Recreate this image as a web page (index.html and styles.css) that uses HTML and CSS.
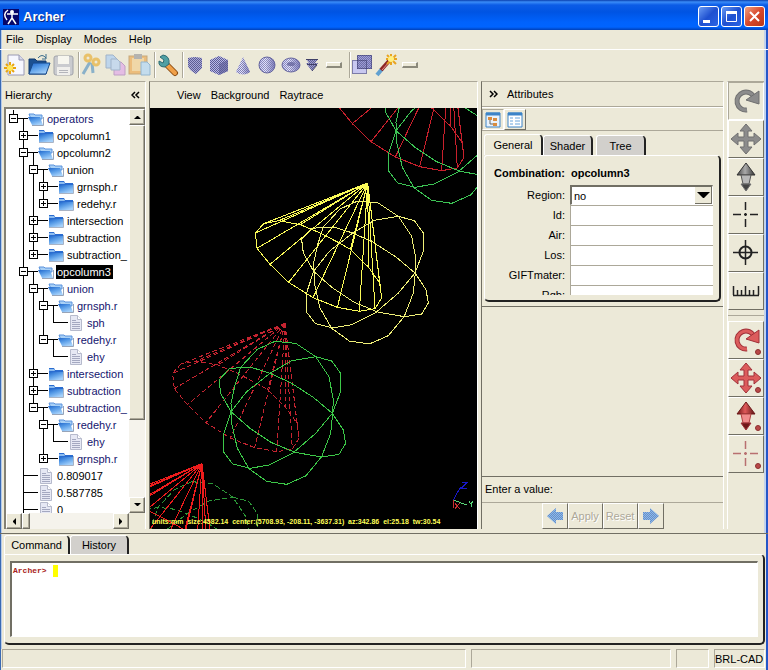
FILE: index.html
```html
<!DOCTYPE html>
<html lang="en">
<head>
    <meta charset="UTF-8">
    <meta name="viewport" content="width=device-width, initial-scale=1.0">
    <title>Archer</title>
    <link rel="stylesheet" href="styles.css">
</head>
<body>
    <!-- shared gradients and tree icons -->
    <svg class="defs" width="0" height="0" aria-hidden="true">
        <defs>
            <pattern id="dither" width="2" height="2" patternUnits="userSpaceOnUse">
                <rect width="1" height="1" fill="#5c5c94"/><rect x="1" y="1" width="1" height="1" fill="#5c5c94"/>
            </pattern>
            <linearGradient id="sheet" x1="0" y1="0" x2="0.600" y2="1">
                <stop offset="0" stop-color="#1f66cc"/><stop offset=".5" stop-color="#5a9ee8"/><stop offset="1" stop-color="#a4d0fa"/>
            </linearGradient>
            <linearGradient id="lav" x1="0" y1="0" x2="1" y2="0">
                <stop offset="0" stop-color="#c8c8f4"/><stop offset=".4" stop-color="#e4e4ff"/><stop offset="1" stop-color="#8080c0"/>
            </linearGradient>
            <linearGradient id="steel" x1="0" y1="0" x2="1" y2="0">
                <stop offset="0" stop-color="#444"/><stop offset=".45" stop-color="#aaa"/><stop offset="1" stop-color="#333"/>
            </linearGradient>
            <linearGradient id="crimson" x1="0" y1="0" x2="1" y2="0">
                <stop offset="0" stop-color="#6a1414"/><stop offset=".45" stop-color="#e05a5a"/><stop offset="1" stop-color="#5a1010"/>
            </linearGradient>
            <symbol id="folder" viewBox="0 0 16 14">
                <path d="M1 1h5l1 2h8v10H1z" fill="#2a6cd0"/>
                <path d="M1 2h5l1 2H1z" fill="#8cbcf0"/>
                <path d="M1 5h14v8H1z" fill="url(#sheet)"/>
                <path d="M1 13.500h14.500V4" fill="none" stroke="#a9b3c4"/>
            </symbol>
            <symbol id="folder-open" viewBox="0 0 16 14">
                <path d="M1 2h5l1 1h7v4H3z" fill="#a8d0f6" stroke="#5a92dc"/>
                <path d="M0 5h12l3 8H4z" fill="url(#sheet)"/>
                <path d="M4 13.500h11.500V5" fill="none" stroke="#98a4b8"/>
            </symbol>
            <symbol id="doc" viewBox="0 0 14 16">
                <path d="M1.500 .500h7l4 4v11h-11z" fill="#e6e8f4" stroke="#b6bacc"/>
                <path d="M8.500 .500v4h4" fill="#fff" stroke="#b6bacc"/>
                <path d="M3 5.500h4M3 7.500h8M3 9.500h8M3 11.500h8M3 13.500h8" stroke="#a4a8c0"/>
            </symbol>
            <symbol id="arrow-rotate" viewBox="0 0 32 32">
                <path d="M17 25A9 9 0 1 1 24 12" fill="none" stroke-width="5"/>
                <path d="M17 25A9 9 0 1 1 24 12" fill="none" class="shine" stroke-width="3"/>
                <path d="M29 6v13l-13-4z" class="fill" stroke-width="1"/>
            </symbol>
            <symbol id="arrow-move" viewBox="0 0 32 32">
                <path d="M16 1l6 7h-4v6h6v-4l7 6-7 6v-4h-6v6h4l-6 7-6-7h4v-6H8v4l-7-6 7-6v4h6V8h-4z" class="fill" stroke-width="1"/>
            </symbol>
            <symbol id="arrow-center" viewBox="0 0 32 32">
                <path d="M15.500 3v8M15.500 20v8M3 15.500h8M20 15.500h8M14 15.500h3M15.500 14v3" stroke-width="1.500"/>
            </symbol>
        </defs>
    </svg>

    <header class="titlebar">
        <svg class="app-icon" width="16" height="16" viewBox="0 0 16 16">
            <rect width="16" height="16" fill="#06066a"/>
            <path d="M5 1Q-1 5 4 11M4 5h11M9 5v4l-4 6M9 9l4 6" fill="none" stroke="#fff" stroke-width="1.500"/>
            <circle cx="9" cy="3" r="2" fill="#fff"/>
        </svg>
        <h1>Archer</h1>
        <button class="win-btn" aria-label="Minimize"><svg width="19" height="19"><path d="M4 13h7v3H4z" fill="#fff"/></svg></button>
        <button class="win-btn" aria-label="Maximize"><svg width="19" height="19"><path d="M4.500 5.500h10v9h-10z" fill="none" stroke="#fff"/><path d="M4 5.500h11" stroke="#fff" stroke-width="3"/></svg></button>
        <button class="win-btn close" aria-label="Close"><svg width="19" height="19"><path d="M5 5l9 9M14 5l-9 9" stroke="#fff" stroke-width="2"/></svg></button>
    </header>

    <nav class="menubar">
        <button>File</button>
        <button>Display</button>
        <button>Modes</button>
        <button>Help</button>
    </nav>

    <div class="toolbar">
        <button aria-label="New"><svg width="24" height="24" viewBox="0 0 24 24">
            <path d="M5 2h11l5 5v15H5z" fill="#f6f7ff" stroke="#9a9ab4"/><path d="M16 2v5h5" fill="#d6d8ea" stroke="#9a9ab4"/>
            <path d="M7 9v12M1 15h12M3 11l8 8M11 11l-8 8" stroke="#e8a410" stroke-width="2"/><circle cx="7" cy="15" r="3" fill="#ffe860"/></svg></button>
        <button aria-label="Open"><svg width="24" height="24" viewBox="0 0 24 24">
            <path d="M2 6h6l2 2h9v13H2z" fill="#1c5090" stroke="#123a70"/><path d="M6 10h17l-4 11H2z" fill="url(#sheet)" stroke="#174a8c"/>
            <path d="M11 5q4-5 8 0M19 1v5h-4" fill="none" stroke="#3a6c8c" stroke-width="1"/></svg></button>
        <button class="faded" aria-label="Save"><svg width="24" height="24" viewBox="0 0 24 24">
            <rect x="3" y="3" width="19" height="19" rx="2" fill="#b4b8ca" stroke="#70758c"/><rect x="7" y="3" width="11" height="8" fill="#fff"/><rect x="6" y="14" width="13" height="8" fill="#f4f4fa"/>
            <path d="M8 17.500h9M8 19.500h9" stroke="#9094a8"/></svg></button>
        <span class="sep"></span>
        <button class="faded" aria-label="Cut"><svg width="24" height="24" viewBox="0 0 24 24">
            <path d="M11 9L4 21M13 10l1 10" stroke="#4a8cc0" stroke-width="3"/>
            <circle cx="9" cy="5" r="3" fill="none" stroke="#e8a820" stroke-width="3"/><circle cx="17" cy="9" r="3" fill="none" stroke="#e8a820" stroke-width="3"/></svg></button>
        <button class="faded" aria-label="Copy"><svg width="24" height="24" viewBox="0 0 24 24">
            <path d="M3 2h7l4 4v9H3z" fill="#a0c8f8" stroke="#7090c0"/><path d="M11 9h7l4 4v9H11z" fill="#e0a0ec" stroke="#a070b8"/><path d="M8 6h6l3 3v8H8z" fill="#b0d0f8" stroke="#7090c0"/></svg></button>
        <button class="faded" aria-label="Paste"><svg width="24" height="24" viewBox="0 0 24 24">
            <rect x="2" y="3" width="18" height="18" fill="#eca040" stroke="#b08040"/><path d="M5 5h12v13H5z" fill="#f4cc88"/><path d="M7 1h8v5H7z" fill="#909094"/>
            <path d="M14 9h6l3 3v10h-9z" fill="#a8d4fc" stroke="#5a94c8"/></svg></button>
        <span class="sep"></span>
        <button aria-label="Preferences"><svg width="24" height="24" viewBox="0 0 24 24">
            <path d="M11 11l9 9" stroke="#8c4c10" stroke-width="6" stroke-linecap="round"/><path d="M12 12l8 8" stroke="#f0a048" stroke-width="4" stroke-linecap="round"/>
            <path d="M5 4l4 3-1 3-4-2q-1 6 6 6l4-3q1-8-6-9z" fill="#50a0a4" stroke="#2e6c74"/></svg></button>
        <span class="sep"></span>
        <button aria-label="Arb"><svg width="24" height="24" viewBox="0 0 24 24">
            <path d="M5 5l7-1 7 1v10l-6 6q-7-4-8-8z" fill="#a8a8d8"/><path d="M5 5l7-1 7 1v10l-6 6q-7-4-8-8z" fill="url(#dither)"/></svg></button>
        <button aria-label="Box"><svg width="24" height="24" viewBox="0 0 24 24">
            <path d="M3 7l9-4 9 4v11l-9 4-9-4z" fill="#b8b8e8"/><path d="M12 11l9-4v11l-9 4z" fill="#8080b8"/><path d="M3 7l9-4 9 4v11l-9 4-9-4z" fill="url(#dither)"/></svg></button>
        <button aria-label="Cone"><svg width="24" height="24" viewBox="0 0 24 24">
            <path d="M12 4l7 15q-7 5-14 0z" fill="url(#lav)"/><path d="M12 4l7 15q-7 5-14 0z" fill="url(#dither)" opacity=".7"/></svg></button>
        <button aria-label="Sphere"><svg width="24" height="24" viewBox="0 0 24 24">
            <circle cx="12" cy="12" r="8" fill="url(#lav)" stroke="#6868a0"/><circle cx="12" cy="12" r="8" fill="url(#dither)" opacity=".6"/></svg></button>
        <button aria-label="Torus"><svg width="24" height="24" viewBox="0 0 24 24">
            <ellipse cx="12" cy="12" rx="9" ry="7" fill="url(#lav)" stroke="#6868a0"/><ellipse cx="12" cy="11" rx="4" ry="2" fill="#8080b4"/><ellipse cx="12" cy="12" rx="9" ry="7" fill="url(#dither)" opacity=".6"/></svg></button>
        <button aria-label="Extrude"><svg width="19" height="24" viewBox="0 0 19 24">
            <path d="M3 6h12l-3 4h3l-6 8-6-8h3z" fill="#a0a0d0"/><path d="M3 6h12l-3 4h3l-6 8-6-8h3z" fill="url(#dither)"/><path d="M3 6.500h12M4 11.500h10M9 18l5-6" stroke="#404068"/></svg></button>
        <button aria-label="More shapes"><span class="more"></span></button>
        <span class="sep"></span>
        <button aria-label="Combination"><svg width="24" height="24" viewBox="0 0 24 24">
            <path d="M7 2h15v14H7z" fill="#a0a0dc"/><path d="M2 7h15v14H2z" fill="#c8c8f0"/><path d="M7 7h10v9H7z" fill="#9c9cd4"/>
            <path d="M7 2h15v14H7z" fill="url(#dither)" opacity=".7"/><path d="M7.500 2.500h14v13h-14zM2.500 7.500h14v13h-14z" fill="none" stroke="#303060" stroke-dasharray="1 1"/></svg></button>
        <button aria-label="Wizard"><svg width="24" height="24" viewBox="0 0 24 24">
            <path d="M3 22l5-6" stroke="#60a0d0" stroke-width="4"/><path d="M7 17l8-9" stroke="#8c2424" stroke-width="4"/><path d="M8 17l7-8" stroke="#e49090" stroke-width="1"/>
            <path d="M17 1v11M12 6h11M13 2l9 9M22 2l-9 9" stroke="#e8a420" stroke-width="2"/><circle cx="17" cy="6" r="3" fill="#fff080"/></svg></button>
        <button aria-label="More wizards"><span class="more"></span></button>
    </div>

    <main class="workspace">
        <section class="hierarchy">
            <div class="pane-head"><h2>Hierarchy</h2><button aria-label="Collapse">
                <svg width="9" height="8"><path d="M4 1L1 4l3 3M8 1L5 4l3 3" class="chev"/></svg></button></div>
            <div class="tree-box">
                <div class="tree">
                    <ul>
                        <li>
                            <div class="row open blue"><button class="box" aria-label="Collapse"></button><svg class="ico"><use href="#folder-open"/></svg><span>operators</span></div>
                            <ul>
                                <li><div class="row"><button class="box plus" aria-label="Expand"></button><svg class="ico"><use href="#folder"/></svg><span>opcolumn1</span></div></li>
                                <li>
                                    <div class="row open"><button class="box" aria-label="Collapse"></button><svg class="ico"><use href="#folder-open"/></svg><span>opcolumn2</span></div>
                                    <ul>
                                        <li>
                                            <div class="row open"><button class="box" aria-label="Collapse"></button><svg class="ico"><use href="#folder-open"/></svg><span>union</span></div>
                                            <ul>
                                                <li><div class="row"><button class="box plus" aria-label="Expand"></button><svg class="ico"><use href="#folder"/></svg><span>grnsph.r</span></div></li>
                                                <li><div class="row"><button class="box plus" aria-label="Expand"></button><svg class="ico"><use href="#folder"/></svg><span>redehy.r</span></div></li>
                                            </ul>
                                        </li>
                                        <li><div class="row"><button class="box plus" aria-label="Expand"></button><svg class="ico"><use href="#folder"/></svg><span>intersection</span></div></li>
                                        <li><div class="row"><button class="box plus" aria-label="Expand"></button><svg class="ico"><use href="#folder"/></svg><span>subtraction</span></div></li>
                                        <li><div class="row"><button class="box plus" aria-label="Expand"></button><svg class="ico"><use href="#folder"/></svg><span>subtraction_</span></div></li>
                                    </ul>
                                </li>
                                <li>
                                    <div class="row open selected"><button class="box" aria-label="Collapse"></button><svg class="ico"><use href="#folder-open"/></svg><span>opcolumn3</span></div>
                                    <ul>
                                        <li>
                                            <div class="row open blue"><button class="box" aria-label="Collapse"></button><svg class="ico"><use href="#folder-open"/></svg><span>union</span></div>
                                            <ul>
                                                <li>
                                                    <div class="row open blue"><button class="box" aria-label="Collapse"></button><svg class="ico"><use href="#folder-open"/></svg><span>grnsph.r</span></div>
                                                    <ul><li><div class="row leaf blue"><svg class="ico"><use href="#doc"/></svg><span>sph</span></div></li></ul>
                                                </li>
                                                <li>
                                                    <div class="row open blue"><button class="box" aria-label="Collapse"></button><svg class="ico"><use href="#folder-open"/></svg><span>redehy.r</span></div>
                                                    <ul><li><div class="row leaf blue"><svg class="ico"><use href="#doc"/></svg><span>ehy</span></div></li></ul>
                                                </li>
                                            </ul>
                                        </li>
                                        <li><div class="row blue"><button class="box plus" aria-label="Expand"></button><svg class="ico"><use href="#folder"/></svg><span>intersection</span></div></li>
                                        <li><div class="row blue"><button class="box plus" aria-label="Expand"></button><svg class="ico"><use href="#folder"/></svg><span>subtraction</span></div></li>
                                        <li>
                                            <div class="row open blue"><button class="box" aria-label="Collapse"></button><svg class="ico"><use href="#folder-open"/></svg><span>subtraction_</span></div>
                                            <ul>
                                                <li>
                                                    <div class="row open blue"><button class="box" aria-label="Collapse"></button><svg class="ico"><use href="#folder-open"/></svg><span>redehy.r</span></div>
                                                    <ul><li><div class="row leaf blue"><svg class="ico"><use href="#doc"/></svg><span>ehy</span></div></li></ul>
                                                </li>
                                                <li><div class="row blue"><button class="box plus" aria-label="Expand"></button><svg class="ico"><use href="#folder"/></svg><span>grnsph.r</span></div></li>
                                            </ul>
                                        </li>
                                    </ul>
                                </li>
                                <li><div class="row leaf"><svg class="ico"><use href="#doc"/></svg><span>0.809017</span></div></li>
                                <li><div class="row leaf"><svg class="ico"><use href="#doc"/></svg><span>0.587785</span></div></li>
                                <li><div class="row leaf"><svg class="ico"><use href="#doc"/></svg><span>0</span></div></li>
                                <li><div class="row leaf"></div></li>
                            </ul>
                        </li>
                    </ul>
                </div>
                <div class="scroll vertical">
                    <button aria-label="Scroll up"><svg width="7" height="4"><path d="M0 4l3-3h1l3 3z"/></svg></button>
                    <div class="thumb"></div>
                    <div class="trough"></div>
                    <button aria-label="Scroll down"><svg width="7" height="4"><path d="M0 0h7L4 3H3z"/></svg></button>
                </div>
                <div class="scroll horizontal">
                    <button aria-label="Scroll left"><svg width="4" height="7"><path d="M4 0v7L1 4V3z"/></svg></button>
                    <div class="thumb"></div>
                    <div class="trough"></div>
                    <button aria-label="Scroll right"><svg width="4" height="7"><path d="M0 0v7l3-3V3z"/></svg></button>
                </div>
            </div>
        </section>

        <section class="view">
            <nav class="view-menu">
                <button>View</button>
                <button>Background</button>
                <button>Raytrace</button>
            </nav>
            <div class="canvas">
                <svg class="wires" viewBox="0 -606 981 1266" preserveAspectRatio="xMinYMin slice">
                    <defs>
                        <g id="cone">
                            <path d="M93 162L68 190 73 236 112 284 168 338 241 384 314 413 380 425 427 417 447 385 441 340 408 293 353 239 318 219 263 190 203 165 138 153z"/>
                            <path d="M405 40L93 162M405 40L68 190M405 40L73 236M405 40L112 284M405 40L168 338M405 40L241 384M405 40L314 413M405 40L380 425M405 40L427 417M405 40L447 385M405 40L441 340M405 40L408 293M405 40L353 239M405 40L203 165M405 40L138 153"/>
                        </g>
                        <g id="ball">
                            <path d="M375 94L437 100 497 140 537 200 550 270 548 310 542 370 515 440 467 498 410 523 350 514 297 476 262 415 245 340 243 280 255 225 272 172 322 118z"/>
                            <path d="M237 177L207 210 212 250 243 305 300 355 365 398 435 427 515 441 567 433 587 400 580 360 547 310 490 262 420 217 360 190 310 174 270 172z"/>
                            <path d="M497 140L545 153 572 190 572 245 547 310 497 370 430 428 357 465 300 475 248 462 220 425 220 375 243 305 290 245 360 190 425 152z"/>
                        </g>
                    </defs>
                    <g class="wire">
                        <use href="#cone" x="495" y="-843" stroke="#c8202c"/>
                        <use href="#ball" x="495" y="-843" stroke="#3cc454"/>
                        <use href="#ball" x="248" y="-421" stroke="#f0f078"/>
                        <use href="#cone" x="248" y="-421" stroke="#fafa58"/>
                        <use href="#cone" stroke="#c42430" stroke-dasharray="14 8"/>
                        <use href="#ball" stroke="#3cc848"/>
                        <use href="#ball" x="-249" y="421" stroke="#2c9838" stroke-dasharray="16 8"/>
                        <use href="#cone" x="-249" y="421" stroke="#ee1c1c"/>
                        <path d="M910 570L932 530M935 517h17l-17 17h17" stroke="#1818c8"/>
                        <path d="M910 570L950 585M957 574l6 8 6-8M963 582v9" stroke="#58d878"/>
                        <path d="M910 570v24M915 580l14 16M929 580l-14 16" stroke="#c83030"/>
                    </g>
                </svg>
                <p class="readout">units:mm&nbsp; size:4582.14&nbsp; center:(5708.93, -208.11, -3637.31)&nbsp; az:342.86&nbsp; el:25.18&nbsp; tw:30.54</p>
            </div>
        </section>

        <section class="attributes">
            <div class="pane-head"><button aria-label="Expand">
                <svg width="9" height="8"><path d="M1 1l3 3-3 3M5 1l3 3-3 3" class="chev"/></svg></button><h2>Attributes</h2></div>
            <div class="modes">
                <button class="pressed" aria-label="Tree mode"><svg width="16" height="16"><path d="M1 1h14v14H1z" fill="#e8f2fc" stroke="#3c84c8"/><path d="M1 2h14" stroke="#3c84c8" stroke-width="3"/><path d="M3 5h4v3H3zM8 6h4v3H8zM8 11h4v3H8z" fill="#d88c40"/><path d="M5 8v4h3" fill="none" stroke="#666"/></svg></button>
                <button aria-label="List mode"><svg width="16" height="16"><path d="M1 1h14v14H1z" fill="#fff" stroke="#3c84c8"/><path d="M1 2h14" stroke="#3c84c8" stroke-width="3"/><path d="M3 6h3M3 9h3M3 12h3M8 6h5M8 9h5M8 12h5" stroke="#68a4dc" stroke-width="1"/></svg></button>
            </div>
            <div class="tabset">
                <div class="tabs">
                    <button class="tab active">General</button>
                    <button class="tab">Shader</button>
                    <button class="tab">Tree</button>
                </div>
                <div class="page">
                    <form class="fields">
                        <h3>Combination:&nbsp; opcolumn3</h3>
                        <label for="region">Region:</label>
                        <div class="combo">
                            <select id="region"><option>no</option><option>yes</option></select>
                            <span class="drop"><svg width="13" height="6"><path d="M0 0h13L7 6H6z"/></svg></span>
                        </div>
                        <label for="id">Id:</label><input type="text" id="id">
                        <label for="air">Air:</label><input type="text" id="air">
                        <label for="los">Los:</label><input type="text" id="los">
                        <label for="gift">GIFTmater:</label><input type="text" id="gift">
                        <label for="rgb">Rgb:</label><input type="text" id="rgb">
                    </form>
                </div>
            </div>
            <div class="blank"></div>
            <p class="hint">Enter a value:</p>
            <div class="actions">
                <button disabled aria-label="Previous"><svg width="18" height="18"><path d="M1 9l9-8v4h7v8h-7v4z" fill="#84bcf0"/><path d="M1 9l9-8v4h7v8h-7v4z" fill="url(#dither)" opacity=".5"/></svg></button>
                <button disabled class="word">Apply</button>
                <button disabled class="word">Reset</button>
                <button disabled aria-label="Next"><svg width="18" height="18"><path d="M17 9L8 1v4H1v8h7v4z" fill="#84bcf0"/><path d="M17 9L8 1v4H1v8h7v4z" fill="url(#dither)" opacity=".5"/></svg></button>
            </div>
        </section>

        <aside class="tools">
            <div class="group grey">
                <button class="pressed" aria-label="Rotate view"><svg width="32" height="32"><use href="#arrow-rotate"/></svg></button>
                <button aria-label="Pan view"><svg width="32" height="32"><use href="#arrow-move"/></svg></button>
                <button aria-label="Scale view"><svg width="32" height="32"><path d="M16 2l9 12H7z" fill="url(#steel)" stroke="#333"/><path d="M11 14h10l-2 9h-6z" fill="#b8b8b8" stroke="#555"/><path d="M11 23h10l-5 7z" fill="#444"/></svg></button>
                <button class="thin" aria-label="Center view"><svg width="32" height="32"><use href="#arrow-center"/></svg></button>
                <button class="thin" aria-label="Pick"><svg width="32" height="32"><circle cx="15.500" cy="15.500" r="6" fill="none" stroke-width="2"/><path d="M15.500 3v25M3 15.500h25" stroke-width="1.500"/></svg></button>
                <button class="thin" aria-label="Measure"><svg width="32" height="32"><path d="M3 20.500h26M3.500 11v9M7.500 15v5M11.500 15v5M15.500 11v9M19.500 15v5M23.500 15v5M28.500 11v9" stroke-width="1.500"/></svg></button>
            </div>
            <div class="group red">
                <button aria-label="Rotate object"><svg width="32" height="32"><use href="#arrow-rotate"/><circle cx="28" cy="28" r="2.500" class="dot"/></svg></button>
                <button aria-label="Move object"><svg width="32" height="32"><use href="#arrow-move"/><circle cx="28" cy="28" r="2.500" class="dot"/></svg></button>
                <button aria-label="Scale object"><svg width="32" height="32"><path d="M16 2l9 12H7z" fill="url(#crimson)" stroke="#6a1818"/><path d="M11 14h10l-2 9h-6z" fill="#f08c8c" stroke="#b04040"/><path d="M11 23h10l-5 7z" fill="#701818"/><circle cx="28" cy="28" r="2.500" class="dot"/></svg></button>
                <button class="thin" aria-label="Center object"><svg width="32" height="32"><use href="#arrow-center"/><circle cx="28" cy="28" r="2.500" class="dot"/></svg></button>
            </div>
        </aside>
    </main>

    <section class="console">
        <div class="tabs">
            <button class="tab active">Command</button>
            <button class="tab">History</button>
        </div>
        <div class="page">
            <div class="terminal">
                <label for="cmd">Archer&gt;</label>
                <span class="caret"></span>
                <input type="text" id="cmd">
            </div>
        </div>
    </section>

    <footer class="status">
        <span class="wide"></span>
        <span class="mid"></span>
        <span class="small"></span>
        <span class="brand">BRL-CAD</span>
    </footer>
</body>
</html>
```
FILE: styles.css
```css
* {
    box-sizing: border-box;
}

body {
    margin: 0;
    height: 100vh;
    display: flex;
    flex-direction: column;
    background-color: #ece9d8;
    color: #000;
    font-family: "Liberation Sans", Arial, sans-serif;
    font-size: 11px;
    line-height: 14px;
    overflow: hidden;
}

h1, h2, h3, p, ul {
    margin: 0;
    padding: 0;
    font-size: 11px;
    font-weight: normal;
}

button, input, select {
    font: inherit;
    color: inherit;
    margin: 0;
    padding: 0;
    border: 0;
    border-radius: 0;
    background: none;
}

svg {
    display: block;
    flex: none;
}

.defs {
    position: absolute;
}

/* title bar */

.titlebar {
    flex: none;
    height: 30px;
    display: flex;
    align-items: center;
    gap: 2px;
    padding: 3px 3px 0 3px;
    background: linear-gradient(#0a3fae 0, #3a8cf8 2px, #0c5ce6 5px, #0054e3 12px, #0062fc 22px, #0064ff 27px, #0040b8 30px);
}

.titlebar h1 {
    flex: 1;
    padding-left: 2px;
    color: #fff;
    font-size: 13px;
    font-weight: bold;
    line-height: 16px;
    text-shadow: 1px 1px #0a2a80;
}

.win-btn {
    width: 21px;
    height: 21px;
    border: 1px solid #fff;
    border-radius: 3px;
    background: linear-gradient(135deg, #6a9cf4, #1e50d0 50%, #2a64e4);
}

.win-btn.close {
    background: linear-gradient(135deg, #f0a080, #d8482c 50%, #b83818);
}

/* menu and toolbar */

.menubar {
    flex: none;
    height: 20px;
    display: flex;
    gap: 12px;
    padding: 0 6px 1px;
    border-bottom: 1px solid #fff;
    box-shadow: inset 1px 0 #3a6ab4, inset 2px 0 #b6cbe8, inset -2px 0 #2456c8, inset -4px 0 #c2d2ec;
}

.toolbar {
    flex: none;
    height: 31px;
    display: flex;
    align-items: center;
    padding: 0 3px 1px;
    box-shadow: inset 1px 0 #3a6ab4, inset 2px 0 #b6cbe8, inset -2px 0 #2456c8, inset -4px 0 #c2d2ec;
}

.toolbar .faded {
    opacity: 0.6;
}

.toolbar .sep {
    width: 4px;
    height: 26px;
    border-right: 1px solid #aca899;
    box-shadow: 1px 0 #fff;
}

.more {
    display: block;
    width: 16px;
    height: 6px;
    margin: 0 4px;
    border: 1px solid #fff;
    border-right: 2px solid #8c8a7c;
    border-bottom: 2px solid #8c8a7c;
}

/* panes */

.workspace {
    flex: 1;
    min-height: 0;
    display: grid;
    grid-template-columns: 144px minmax(0, 1fr) 243px 37px;
    gap: 3px;
    padding: 0 4px 4px 2px;
    box-shadow: inset 1px 0 #3a6ab4, inset 2px 0 #b6cbe8, inset -2px 0 #2456c8, inset -4px 0 #c2d2ec;
}

.workspace > section {
    min-height: 0;
    display: flex;
    flex-direction: column;
    border-top: 1px solid #aca899;
}

.pane-head {
    flex: none;
    height: 25px;
    display: flex;
    align-items: center;
}

.chev {
    fill: none;
    stroke: #000;
    stroke-width: 1.5;
}

.hierarchy .pane-head {
    justify-content: space-between;
    padding: 0 5px 0 3px;
}

.hierarchy {
    border-right: 1px solid #fff;
}

.tree-box {
    flex: 1;
    min-height: 0;
    display: grid;
    grid-template-columns: minmax(0, 1fr) 16px;
    grid-template-rows: minmax(0, 1fr) 16px;
    margin-left: 2px;
    border: 2px solid #848174;
    border-right-width: 0;
    border-bottom-width: 0;
}

.tree {
    overflow: hidden;
    padding: 1px 0 0 3px;
    background-color: #fff;
}

.tree ul {
    list-style: none;
}

.tree li {
    background: linear-gradient(#000, #000) 4px 0 / 1px 100% no-repeat;
}

.tree li:last-child {
    background-size: 1px 9px;
}

.tree li ul {
    padding-left: 10px;
}

.row {
    height: 17px;
    display: flex;
    align-items: center;
    white-space: nowrap;
}

/* the stub that drops from an open node to its children */
.row.open {
    background: linear-gradient(#000, #000) 14px 100% / 1px 8px no-repeat;
}

.row::before {
    content: "";
    order: 1;
    width: 10px;
    height: 1px;
    background-color: #000;
}

.row.leaf::before {
    width: 15px;
    margin-left: 4px;
}

.box {
    width: 9px;
    height: 9px;
    border: 1px solid #000;
    background: linear-gradient(#000, #000) center / 5px 1px no-repeat, #fff;
}

.box.plus {
    background: linear-gradient(#000, #000) center / 5px 1px no-repeat, linear-gradient(#000, #000) center / 1px 5px no-repeat, #fff;
}

.ico {
    order: 2;
    width: 16px;
    height: 14px;
}

.leaf .ico {
    height: 16px;
}

.row span {
    order: 3;
    padding: 0 2px 0 1px;
    margin-left: 2px;
}

.row.blue {
    color: #14146e;
}

.row.selected span {
    background-color: #000;
    color: #fff;
}

.scroll {
    display: flex;
    background-color: #f5f3ec;
}

.vertical {
    flex-direction: column;
}

.horizontal {
    grid-column: 1;
}

.scroll button, .thumb {
    flex: none;
    width: 16px;
    height: 16px;
    display: flex;
    align-items: center;
    justify-content: center;
    background-color: #ece9d8;
    border: 1px solid #fff;
    border-right-color: #716f64;
    border-bottom-color: #716f64;
    box-shadow: inset -1px -1px #aca899;
}

.vertical .thumb {
    height: 73%;
}

.horizontal .thumb {
    width: 8px;
}

.trough {
    flex: 1;
}

/* 3D view */

.view {
    border-left: 1px solid #716f64;
    border-right: 1px solid #fff;
}

.view-menu {
    flex: none;
    height: 26px;
    display: flex;
    gap: 10px;
    padding-left: 27px;
}

.canvas {
    flex: 1;
    min-height: 0;
    position: relative;
    overflow: hidden;
    background-color: #000;
}

.wires {
    width: 100%;
    height: 100%;
}

.wire {
    fill: none;
    stroke-width: 3;
    shape-rendering: crispEdges;
}

.readout {
    position: absolute;
    left: 2px;
    bottom: 1px;
    color: #ffff58;
    font-size: 7px;
    font-weight: bold;
    line-height: 12px;
    white-space: nowrap;
}

/* attributes */

.attributes {
    border-left: 1px solid #716f64;
    border-right: 1px solid #fff;
}

.attributes .pane-head {
    gap: 9px;
    padding-left: 7px;
    border-bottom: 1px solid #aca899;
    box-shadow: 0 1px #fff;
}

.modes {
    flex: none;
    display: flex;
    height: 24px;
    padding-top: 2px;
    border-bottom: 1px solid #aca899;
}

.modes button {
    width: 22px;
    display: flex;
    align-items: center;
    justify-content: center;
    border: 1px solid #fff;
    border-right-color: #716f64;
    border-bottom-color: #716f64;
}

.modes .pressed {
    border-color: #aca899 #fff #fff #aca899;
}

.tabset {
    padding: 3px 2px 4px 2px;
    border-bottom: 1px solid #716f64;
}

.tabs {
    display: flex;
    align-items: flex-end;
}

.tab {
    width: 50px;
    height: 20px;
    margin-right: 3px;
    background-color: #d2d0cc;
    border-top: 1px solid #fff;
    border-left: 1px solid #fff;
    border-right: 2px solid #222;
    border-radius: 3px 5px 0 0;
}

.tab.active {
    width: 59px;
    height: 21px;
    margin-right: 0;
    background-color: #ece9d8;
}

.page {
    border: 1px solid #fff;
    border-right: 2px solid #222;
    border-bottom: 2px solid #222;
    border-radius: 3px 5px 5px 5px;
}

.attributes .page {
    padding: 9px 6px 5px 9px;
}

.fields {
    height: 130px;
    overflow: hidden;
    display: grid;
    grid-template-columns: 71px 1fr;
    grid-auto-rows: 20px;
    column-gap: 5px;
    align-content: start;
}

.fields h3 {
    grid-column: 1 / 3;
    font-weight: bold;
    line-height: 16px;
}

.fields label {
    text-align: right;
    line-height: 20px;
}

.fields input {
    min-width: 0;
    background-color: #fff;
    border-top: 1px solid #aca899;
    border-left: 1px solid #aca899;
}

.combo {
    position: relative;
    border: 2px solid #716f64;
    border-right: 1px solid #fff;
    border-bottom: 1px solid #fff;
    background-color: #fff;
}

.combo select {
    width: 100%;
    height: 100%;
    padding-left: 2px;
    appearance: none;
}

.drop {
    position: absolute;
    top: 0;
    right: 0;
    bottom: 0;
    width: 17px;
    display: flex;
    align-items: center;
    justify-content: center;
    background-color: #ece9d8;
    border-right: 1px solid #716f64;
    border-bottom: 1px solid #716f64;
    pointer-events: none;
}

.blank {
    flex: 1;
    border-bottom: 1px solid #716f64;
}

.hint {
    height: 26px;
    padding-left: 3px;
    line-height: 25px;
    border-bottom: 1px solid #aca899;
}

.actions {
    display: flex;
    justify-content: center;
    height: 26px;
}

.actions button {
    width: 26px;
    display: flex;
    align-items: center;
    justify-content: center;
    border: 1px solid #fff;
    border-right-color: #716f64;
    border-bottom-color: #716f64;
    color: #aca899;
    text-shadow: 1px 1px #fff;
}

.actions .word {
    width: 35px;
}

/* right tool strip */

.tools {
    border-top: 1px solid #aca899;
    border-left: 1px solid #fff;
}

.group button {
    width: 100%;
    height: 38px;
    display: flex;
    align-items: center;
    justify-content: center;
    border: 1px solid #fff;
    border-right-color: #716f64;
    border-bottom-color: #716f64;
}

.group .pressed {
    border-color: #aca899 #fff #fff #aca899;
}

.grey {
    margin-bottom: 5px;
    stroke: #707070;
}

.grey button {
    color: #8c8c8c;
}

.grey .thin {
    stroke: #222;
}

.red {
    padding-top: 5px;
    border-top: 1px solid #aca899;
    stroke: #a03038;
}

.red button {
    color: #dc5c5c;
}

.red .thin {
    stroke: #b87070;
}

.shine {
    stroke: currentColor;
}

.fill {
    fill: currentColor;
}

.dot {
    fill: #b84848;
    stroke: #8c3030;
    stroke-width: 1px;
}

/* command console */

.console {
    flex: none;
    padding: 1px 3px 4px 4px;
    border-top: 1px solid #716f64;
    box-shadow: inset 1px 0 #3a6ab4, inset 2px 0 #b6cbe8, inset -2px 0 #2456c8;
}

.console .tab {
    width: 59px;
    height: 19px;
}

.console .tab.active {
    width: 66px;
}

.console .page {
    padding: 6px 5px;
    border-top-left-radius: 0;
}

.terminal {
    height: 76px;
    display: flex;
    align-items: flex-start;
    padding: 2px 1px;
    background-color: #fff;
    border: 2px solid #716f64;
    border-right: 1px solid #fff;
    border-bottom: 1px solid #fff;
    color: #a82020;
    font-family: "Liberation Mono", "Courier New", monospace;
    font-size: 8px;
    font-weight: bold;
    line-height: 12px;
}

.caret {
    width: 5px;
    height: 12px;
    margin-left: 6px;
    background-color: #ffff00;
}

.terminal input {
    flex: 1;
    min-width: 0;
    height: 12px;
    outline: 0;
}

/* status bar */

.status {
    flex: none;
    height: 21px;
    display: flex;
    gap: 5px;
    padding: 0 3px 2px 2px;
    line-height: 18px;
    box-shadow: inset 1px 0 #3a6ab4, inset -2px 0 #2456c8;
}

.status span {
    border: 1px solid #fff;
    border-top-color: #aca899;
    border-left-color: #aca899;
}

.status .wide {
    flex: 7;
}

.status .mid {
    flex: 3;
}

.status .small {
    width: 33px;
}

.status .brand {
    width: 51px;
}
```
